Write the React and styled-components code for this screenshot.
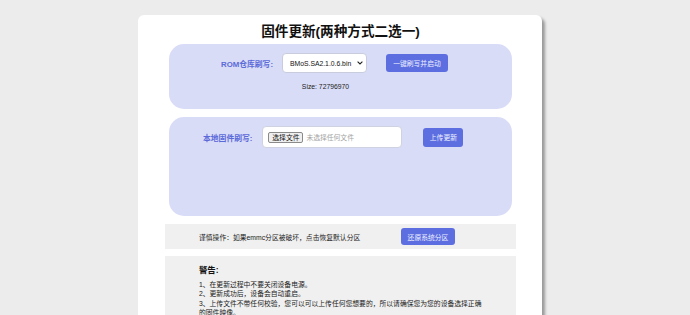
import React from 'react';
import styled, { createGlobalStyle } from 'styled-components';

const GlobalStyle = createGlobalStyle`
    html, body {
        margin: 0;
        padding: 0;
        background: #ececec;
    }
    body {
        font-family: "Liberation Sans", "Noto Sans CJK SC", sans-serif;
        font-size: 6.8px;
        color: #222;
    }
`

const Page = styled.div`
    padding: 15px 10px 24px 0;
    min-height: 480px;
    box-sizing: border-box;
`

const Card = styled.div`
    width: 404px;
    margin: 0 auto;
    background: #fff;
    border-radius: 6px;
    box-shadow: 3px 3px 3px rgba(0, 0, 0, 0.35);
    padding: 7px 26px 14px 27px;
    box-sizing: border-box;
`

const Title = styled.h1`
    margin: 0 0 3px;
    text-align: center;
    font-size: 13.6px;
    line-height: 19px;
    font-weight: bold;
    color: #111;
`

const Panel = styled.div`
    margin: ${p => p.first ? '0' : '8px'} 4px 0;
    background: #d9dcf7;
    border-radius: 15px;
    box-sizing: border-box;
    height: ${p => p.tall ? '99px' : '65px'};
    padding: ${p => p.tall ? '9px 0 0 34px' : '9px 0 0 52px'};
`

const RomGrid = styled.div`
    display: grid;
    grid-template-columns: auto 85px auto;
    column-gap: 9px;
    row-gap: 10px;
    align-items: center;
    justify-content: start;
`

const Label = styled.span`
    font-size: 7.8px;
    font-weight: bold;
    color: #5b6ad9;
    white-space: nowrap;
`

const SelectWrap = styled.div`
    position: relative;
    width: 85px;
    height: 20px;
`

const Select = styled.select`
    appearance: none;
    width: 85px;
    height: 20px;
    font-family: inherit;
    font-size: 6.8px;
    color: #111;
    background: #fff;
    border: 1px solid #c9ccdc;
    border-radius: 4px;
    padding: 0 12px 0 7px;
`

const Chevron = styled.svg`
    position: absolute;
    right: 4px;
    top: 8px;
    pointer-events: none;
`

const Button = styled.button`
    width: ${p => p.w}px;
    height: ${p => p.h}px;
    margin-left: ${p => p.gap || 0}px;
    padding: 0;
    font-family: inherit;
    font-size: 6.8px;
    color: #eef0ff;
    background: #5d6ee1;
    border: none;
    border-radius: 3px;
    white-space: nowrap;
`

const SizeText = styled.span`
    grid-column: 2;
    justify-self: center;
    font-size: 6.8px;
    color: #222;
    padding-left: 2px;
`

const UploadRow = styled.div`
    display: flex;
    align-items: center;
`

const FileBox = styled.label`
    display: flex;
    align-items: center;
    gap: 3px;
    width: 140px;
    height: 22px;
    margin-left: 10px;
    padding-left: 5px;
    box-sizing: border-box;
    background: #fff;
    border: 1px solid #cfd2e0;
    border-radius: 4px;
`

const FakeFileButton = styled.span`
    display: inline-flex;
    align-items: center;
    justify-content: center;
    width: 35px;
    height: 11px;
    box-sizing: border-box;
    background: #efefef;
    border: 1px solid #8a8a8a;
    border-radius: 2px;
    font-size: 6.8px;
    color: #111;
`

const FileHint = styled.span`
    font-size: 6.8px;
    color: #a3a3a3;
`

const Band = styled.div`
    margin-top: ${p => p.mt}px;
    background: #f0f0f0;
    padding: ${p => p.pad};
    box-sizing: border-box;
`

const RestoreRow = styled.div`
    display: flex;
    align-items: center;
    height: 25px;
`

const BandText = styled.span`
    font-size: 6.8px;
    color: #222;
    width: 202px;
`

const WarnTitle = styled.h4`
    margin: 0 0 4px;
    font-size: 8.4px;
    line-height: 12px;
    font-weight: bold;
    color: #111;
`

const WarnLine = styled.p`
    margin: 0;
    font-size: 6.8px;
    line-height: 9.4px;
    color: #222;
`

function App() {
    return (
        <Page>
            <GlobalStyle />
            <Card>
                <Title>固件更新(两种方式二选一)</Title>

                <Panel first>
                    <RomGrid>
                        <Label>ROM仓库刷写:</Label>
                        <SelectWrap>
                            <Select defaultValue="BMoS.SA2.1.0.6.bin">
                                <option>BMoS.SA2.1.0.6.bin</option>
                            </Select>
                            <Chevron width="6" height="4" viewBox="0 0 6 4">
                                <path d="M0.6 0.6 L3 3 L5.4 0.6" fill="none" stroke="#222" strokeWidth="1.1" />
                            </Chevron>
                        </SelectWrap>
                        <Button w={62} h={18} gap={10}>一键刷写并启动</Button>
                        <SizeText>Size: 72796970</SizeText>
                    </RomGrid>
                </Panel>

                <Panel tall>
                    <UploadRow>
                        <Label>本地固件刷写:</Label>
                        <FileBox>
                            <FakeFileButton>选择文件</FakeFileButton>
                            <FileHint>未选择任何文件</FileHint>
                        </FileBox>
                        <Button w={40} h={19} gap={21}>上传更新</Button>
                    </UploadRow>
                </Panel>

                <Band mt={8} pad="0 0 0 34px">
                    <RestoreRow>
                        <BandText>谨慎操作：如果emmc分区被破坏，点击恢复默认分区</BandText>
                        <Button w={54} h={17}>还原系统分区</Button>
                    </RestoreRow>
                </Band>

                <Band mt={7} pad="8px 34px 150px">
                    <WarnTitle>警告:</WarnTitle>
                    <WarnLine>1、在更新过程中不要关闭设备电源。</WarnLine>
                    <WarnLine>2、更新成功后，设备会自动重启。</WarnLine>
                    <WarnLine>3、上传文件不带任何校验，您可以可以上传任何您想要的，所以请确保您为您的设备选择正确的固件映像。</WarnLine>
                </Band>
            </Card>
        </Page>
    );
}

export default App;
